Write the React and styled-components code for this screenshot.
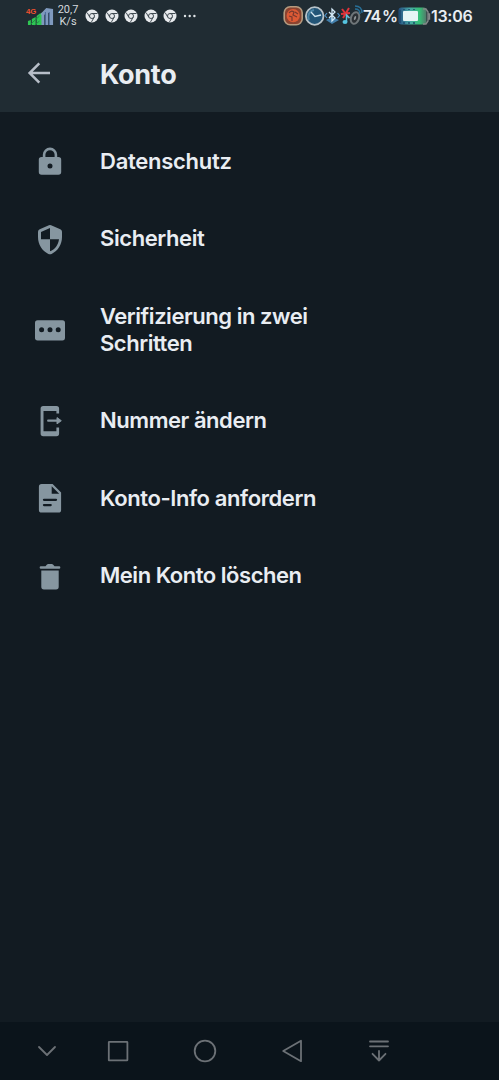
import React from 'react'
import styled, { createGlobalStyle } from 'styled-components'

const GlobalStyle = createGlobalStyle`
  body {
    margin: 0;
    background: #121b22;
  }

  svg {
    display: block;
    flex: none;
  }
`

const Screen = styled.div`
  display: flex;
  flex-direction: column;
  width: 499px;
  height: 1080px;
  overflow: hidden;
  background: #121b22;
  color: #e9edf2;
  font-family: Inter, Roboto, sans-serif;
`

const StatusBar = styled.div`
  display: flex;
  align-items: center;
  justify-content: space-between;
  box-sizing: border-box;
  height: 32px;
  padding: 0 26px;
  background: #202c33;
`

const StatusGroup = styled.div`
  display: flex;
  align-items: center;
`

const Speed = styled.div`
  width: 24px;
  margin: 0 5px 0 1px;
  font-family: Roboto, sans-serif;
  font-size: 11px;
  line-height: 12px;
  text-align: center;
  color: #d5dade;
`

const Notifications = styled.div`
  display: flex;
  gap: 5.5px;
  margin-right: 6px;
`

const StatusText = styled.span`
  width: ${props => props.$width}px;
  font-size: 16px;
  font-weight: 600;
  line-height: 20px;
  letter-spacing: ${props => props.$spacing || 0}px;
  word-spacing: -1.5px;
  white-space: nowrap;
`

const Header = styled.header`
  display: flex;
  align-items: center;
  height: 80px;
  padding-left: 26px;
  background: #202c33;
`

const HeaderTitle = styled.h1`
  margin: 6px 0 0 48px;
  font-size: 27px;
  font-weight: 650;
  line-height: 34px;
  letter-spacing: -0.3px;
`

const BackButton = styled.button`
  margin: 2px 0 0;
  padding: 0;
  border: 0;
  background: none;
  color: #b7bec8;
`

const Menu = styled.ul`
  flex: 1;
  margin: 0;
  padding: 10.5px 0 0;
  list-style: none;
`

const MenuItem = styled.li`
  display: flex;
  align-items: center;
  padding: 25.25px 0 25.25px 32px;
`

const MenuIcon = styled.svg`
  width: 36px;
  height: 36px;
  margin: -4.5px 32px -4.5px 0;
  color: #8696a0;
`

const Label = styled.span`
  width: 230px;
  font-size: 22px;
  font-weight: 630;
  line-height: 27px;
  letter-spacing: ${props => props.$spacing}px;
`

const NavBar = styled.nav`
  display: grid;
  grid-template-columns: 71px 87px 86.5px 87.5px 24px;
  align-items: center;
  height: 58px;
  padding-left: 35px;
  background: #0b141b;
  color: #6c7176;
`

const NavIcon = styled.svg`
  width: 24px;
  height: 24px;
  fill: none;
  stroke: currentColor;
  stroke-width: 1.8;
  stroke-linecap: round;
  stroke-linejoin: round;
`

const SignalText = styled.text`
  font-family: 'Liberation Sans', sans-serif;
  font-size: 8px;
  font-weight: bold;
  fill: #f0512f;
`

const SignalIcon = () => (
  <svg width="29" height="20" viewBox="0 0 30 20" preserveAspectRatio="none">
    <path d="M2 19v-4l3-1v5zM6 19v-6l4-2v8zM11 19v-9l4-3v12zM15 19V8l2-2v13z" fill="#2fc653" />
    <path d="M5 18l9-8M9 19l5-4" stroke="#1f8d44" />
    <path d="M15 8l6-6 7 1v16h-4V7h-1v12h-3V8l-1 1v10h-3V9z" fill="#7f99be" />
    <path d="M20 6v13M24 6v13" stroke="#456899" />
    <SignalText x="0" y="8">4G</SignalText>
  </svg>
)

const ChromeIcon = () => (
  <svg width="14" height="14" viewBox="0 0 14 14">
    <circle cx="7" cy="7" r="6.5" fill="#e7eaed" />
    <g fill="none" stroke="#414b52" strokeWidth="1">
      <circle cx="7" cy="7" r="2.5" />
      <path d="M7 4.5h5.5M4.8 8.2L2.2 3.7M9.2 8.2l-2.7 4.7" />
    </g>
  </svg>
)

const MoreIcon = () => (
  <svg width="14" height="4" viewBox="0 0 14 4" fill="#dfe4e7">
    <circle cx="2" cy="2" r="1.2" />
    <circle cx="6.7" cy="2" r="1.2" />
    <circle cx="11.4" cy="2" r="1.2" />
  </svg>
)

const SystemIcons = () => (
  <svg width="80" height="22" viewBox="0 0 80 22">
    <rect x="1.2" y="1.7" width="18" height="18" rx="6" fill="#8b4330" stroke="#b59a7e" strokeWidth="1.6" />
    <circle cx="10.2" cy="10.7" r="6.6" fill="#dc5a35" />
    <path d="M6 8q2-3 5-1l-1 3 4 2M6 11l3 1v4M12 7l3 2" fill="none" stroke="#77392e" strokeWidth="1.2" />
    <circle cx="31.7" cy="11" r="8.8" fill="#235577" stroke="#b8c3c9" strokeWidth="1.8" />
    <path d="M26 15a7 7 0 0 1 5-10" fill="none" stroke="#4c85a6" strokeWidth="2" />
    <path d="M28 7l4 4.5 6-1.5" fill="none" stroke="#d2e4ee" strokeWidth="1.3" />
    <path d="M43 15l6-3 7 3-7 4z" fill="#427fac" />
    <path d="M46 7l6 6-3 3V4l3 3-6 6" fill="none" stroke="#d4eaf8" strokeWidth="1.3" />
    <path d="M44 8l-2 2.5 2 2.5M54.5 8l2 2.5-2 2.5" fill="none" stroke="#4c92c7" strokeWidth="1.2" />
    <path d="M59 4l7 9M66 3l-6 10M58 9l9-1" stroke="#df343b" strokeWidth="2" />
    <path d="M63.5 17V10l3 3" fill="none" stroke="#55c4e0" strokeWidth="1.5" />
    <ellipse cx="62" cy="17" rx="2.5" ry="2" fill="#55c4e0" />
    <ellipse cx="72" cy="13" rx="4" ry="6" transform="rotate(20 72 13)" fill="#2b3034" stroke="#6f7679" strokeWidth="2" />
    <ellipse cx="72" cy="13" rx="1" ry="2" transform="rotate(20 72 13)" fill="#8d9295" />
    <path d="M72 4c3 0 5 2 5 5M72 1c5 0 7 3 7 7" fill="none" stroke="#286f97" strokeWidth="1.4" />
  </svg>
)

const BatteryIcon = () => (
  <svg width="33" height="20" viewBox="0 0 33 20">
    <defs>
      <linearGradient id="charge">
        <stop offset="0" stopColor="#244d80" />
        <stop offset="0.4" stopColor="#48a9a8" />
        <stop offset="0.75" stopColor="#35c076" />
        <stop offset="1" stopColor="#54776b" />
      </linearGradient>
    </defs>
    <rect x="0.5" y="1.5" width="28" height="17" rx="3" fill="url(#charge)" />
    <rect x="5" y="5" width="15" height="10" rx="1" fill="#e5f5f5" />
    <path d="M2 4v13M6 3v1M11 3v1M16 3v1M6 16v2M11 16v2M16 16v2" stroke="#1c496d" strokeWidth="1.5" />
    <path d="M25 3h3l2 3v9l-2 3h-3M30 8h1.5v5H30" fill="none" stroke="#858889" strokeWidth="1.4" />
  </svg>
)

const LockIcon = () => (
  <MenuIcon viewBox="0 0 36 36">
    <path d="M12.1 15v-3.2a5.9 5.9 0 0 1 11.8 0V15" fill="none" stroke="currentColor" strokeWidth="2.6" />
    <path
      fillRule="evenodd"
      fill="currentColor"
      d="M9.6 14h16.8a2.8 2.8 0 0 1 2.8 2.8V29a2.8 2.8 0 0 1-2.8 2.8H9.6A2.8 2.8 0 0 1 6.8 29V16.8a2.8 2.8 0 0 1 2.8-2.8zM18 20.4a2.5 2.5 0 1 0 0 5a2.5 2.5 0 1 0 0-5z"
    />
  </MenuIcon>
)

const ShieldIcon = () => (
  <MenuIcon viewBox="0 0 36 36">
    <path
      fillRule="evenodd"
      fill="currentColor"
      d="M16.9 4.2a2.8 2.8 0 0 1 2.2 0l9.2 4A2.8 2.8 0 0 1 30 10.7V16c0 7.5-4 13.8-10.4 16.9q-1.6.8-3.2 0C10 29.8 6 23.5 6 16v-5.3a2.8 2.8 0 0 1 1.7-2.5zM18 7l-9 4v7.2h9zM18 18.2v12c5-1.8 8.3-6.4 9-12z"
    />
  </MenuIcon>
)

const PinIcon = () => (
  <MenuIcon viewBox="0 0 36 36">
    <rect x="3" y="8.2" width="30" height="20.2" rx="2.6" fill="currentColor" />
    <g fill="#121b22">
      <circle cx="9.6" cy="17.8" r="2.5" />
      <circle cx="18" cy="17.8" r="2.5" />
      <circle cx="26.2" cy="17.8" r="2.5" />
    </g>
  </MenuIcon>
)

const ChangeNumberIcon = () => (
  <MenuIcon viewBox="0 0 36 36">
    <path
      fill="currentColor"
      d="M11.2 3h13.3A2.6 2.6 0 0 1 27.1 5.6v5h-2.7V8H11.5v20.2h12.9v-3.6h2.7v6a2.6 2.6 0 0 1-2.6 2.6H11.2a2.6 2.6 0 0 1-2.6-2.6v-25A2.6 2.6 0 0 1 11.2 3z"
    />
    <path d="M16.2 17.7h9" stroke="currentColor" strokeWidth="2.3" strokeLinecap="round" />
    <path d="M25 14.6l4.3 3.1-4.3 3.2z" fill="currentColor" stroke="currentColor" strokeLinejoin="round" />
  </MenuIcon>
)

const DocumentIcon = () => (
  <MenuIcon viewBox="0 0 36 36">
    <path
      fill="currentColor"
      d="M9.6 4h11l8.5 8.5v17.4a2.7 2.7 0 0 1-2.7 2.7H9.6a2.7 2.7 0 0 1-2.7-2.7V6.7A2.7 2.7 0 0 1 9.6 4z"
    />
    <path d="M19.7 6.2v7.5h7.5z" fill="#121b22" />
    <path d="M12 19.8h12M12 25.1h6.7" stroke="#121b22" strokeWidth="2.3" strokeLinecap="round" />
  </MenuIcon>
)

const TrashIcon = () => (
  <MenuIcon viewBox="0 0 36 36">
    <path
      fill="currentColor"
      d="M8.9 8.2h4.6l1.5-1.6q.5-.5 1.2-.5h3.6q.7 0 1.2.5l1.5 1.6h4.6a1.25 1.25 0 0 1 0 2.5H8.9a1.25 1.25 0 0 1 0-2.5zM9.3 12.4h17.4v16.4a2.6 2.6 0 0 1-2.6 2.6H11.9a2.6 2.6 0 0 1-2.6-2.6z"
    />
  </MenuIcon>
)

const items = [
  { name: 'Datenschutz', icon: LockIcon, spacing: -0.26 },
  { name: 'Sicherheit', icon: ShieldIcon, spacing: -0.4 },
  { name: 'Verifizierung in zwei Schritten', icon: PinIcon, spacing: -0.46 },
  { name: 'Nummer ändern', icon: ChangeNumberIcon, spacing: -0.45 },
  { name: 'Konto-Info anfordern', icon: DocumentIcon, spacing: -0.4 },
  { name: 'Mein Konto löschen', icon: TrashIcon, spacing: -0.47 }
]

const App = () => {
  return (
    <Screen>
      <GlobalStyle />

      <StatusBar>
        <StatusGroup>
          <SignalIcon />
          <Speed>
            20,7
            <br />
            K/s
          </Speed>
          <Notifications>
            {[0, 1, 2, 3, 4].map(index => (
              <ChromeIcon key={index} />
            ))}
          </Notifications>
          <MoreIcon />
        </StatusGroup>

        <StatusGroup>
          <SystemIcons />
          <StatusText $width={35} $spacing={-0.8}>74 %</StatusText>
          <BatteryIcon />
          <StatusText $width={42} $spacing={-0.3}>13:06</StatusText>
        </StatusGroup>
      </StatusBar>

      <Header>
        <BackButton aria-label="Zurück">
          <svg width="26" height="26" viewBox="0 0 26 26" fill="none" stroke="currentColor" strokeWidth="2.5">
            <path d="M24 13H4M13.3 3.3L3.6 13l9.7 9.7" />
          </svg>
        </BackButton>
        <HeaderTitle>Konto</HeaderTitle>
      </Header>

      <Menu>
        {items.map(({ name, icon: Icon, spacing }) => (
          <MenuItem key={name}>
            <Icon />
            <Label $spacing={spacing}>{name}</Label>
          </MenuItem>
        ))}
      </Menu>

      <NavBar>
        <NavIcon viewBox="0 0 24 24">
          <path d="M4 8l8 8 8-8" />
        </NavIcon>
        <NavIcon viewBox="0 0 24 24">
          <rect x="2.8" y="2.8" width="18.6" height="18.6" rx="0.5" />
        </NavIcon>
        <NavIcon viewBox="0 0 24 24">
          <circle cx="12" cy="12" r="10.3" />
        </NavIcon>
        <NavIcon viewBox="0 0 24 24">
          <path d="M21 1.8v20.4L3.2 12z" />
        </NavIcon>
        <NavIcon viewBox="0 0 24 24">
          <path d="M3 2.5h18M3 7.3h18M12 12v9.5M5.5 14.8l6.5 6.7 6.5-6.7" />
        </NavIcon>
      </NavBar>
    </Screen>
  )
}

export default App
